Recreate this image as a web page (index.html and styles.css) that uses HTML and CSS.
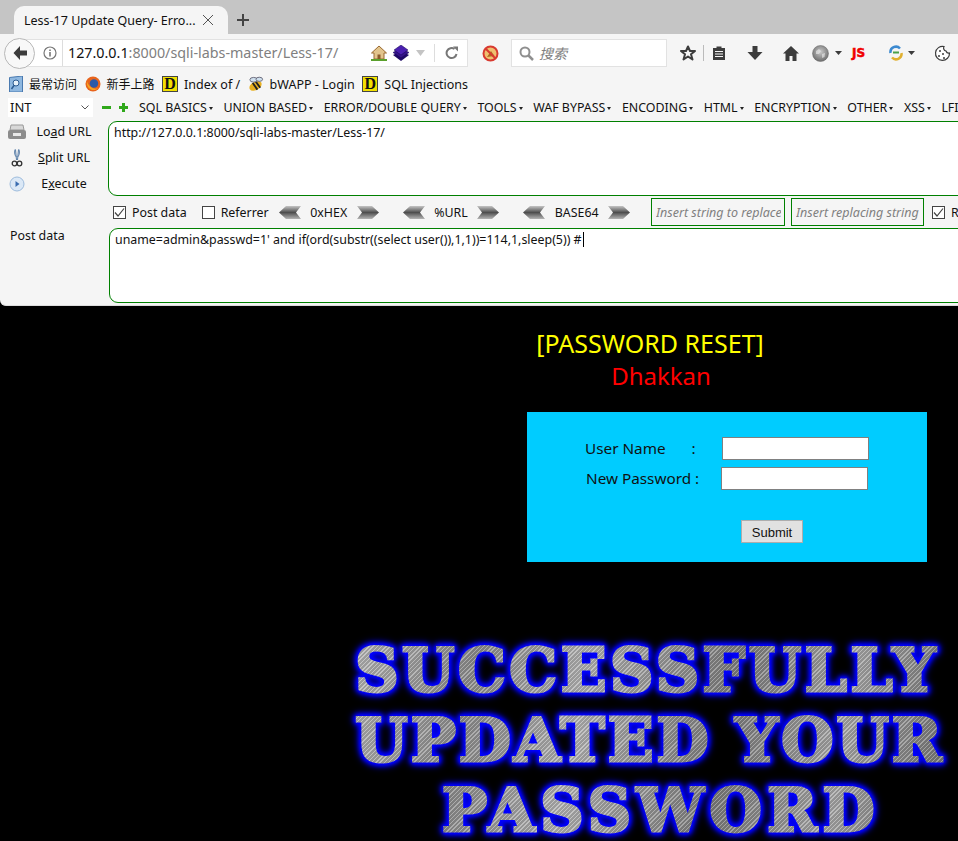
FILE: index.html
```html
<!DOCTYPE html>
<html lang="en">

<head>
    <meta charset="utf-8">
    <meta name="viewport" content="width=device-width, initial-scale=1">
    <title>Less-17 Update Query- Error based</title>
    <link rel="stylesheet" href="styles.css">
</head>

<body>
    <!-- Shared chevron for the encode buttons -->
    <svg class="defs" width="0" height="0">
        <defs>
            <linearGradient id="chev" x1="0" y1="0" x2="0" y2="1">
                <stop offset="0" stop-color="#c4c4c4"/>
                <stop offset="0.5" stop-color="#4e4e4e"/>
                <stop offset="1" stop-color="#b4b4b4"/>
            </linearGradient>
            <radialGradient id="globe" cx="0.5" cy="0.4" r="0.6">
                <stop offset="0" stop-color="#c8c8c8"/>
                <stop offset="1" stop-color="#6e6e6e"/>
            </radialGradient>
            <symbol id="chev-left" viewBox="0 0 22 13">
                <path d="M0 6.500 7 0H22L17 6.500 22 13H7Z" fill="url(#chev)"/>
            </symbol>
            <symbol id="chev-right" viewBox="0 0 22 13">
                <path d="M22 6.500 15 0H0L5 6.500 0 13H15Z" fill="url(#chev)"/>
            </symbol>
        </defs>
    </svg>

    <!-- Tab strip -->
    <div class="tabstrip">
        <div class="tab">
            <span class="tab-title">Less-17 Update Query- Erro...</span>
            <svg class="tab-close" width="10" height="10" viewBox="0 0 10 10"><path d="M0 0 10 10M10 0 0 10" stroke="#555" stroke-width="1" fill="none"/></svg>
        </div>
        <svg class="tab-new" width="12" height="12" viewBox="0 0 12 12"><path d="M6 0V12M0 6H12" stroke="#444" stroke-width="2" fill="none"/></svg>
    </div>

    <!-- Navigation toolbar -->
    <div class="toolbar">
        <div class="back">
            <svg width="16" height="16" viewBox="0 0 16 16"><path d="M8 1 1.500 8 8 15V10.500H15V5.500H8Z" fill="#3c3c3c"/></svg>
        </div>
        <div class="urlbar">
            <svg class="info" width="14" height="14" viewBox="0 0 14 14"><circle cx="7" cy="7" r="6" fill="none" stroke="#777" stroke-width="1.200"/><path d="M7 6V10.500M7 3.500V5" stroke="#777" stroke-width="1.600" fill="none"/></svg>
            <span class="url"><b>127.0.0.1</b>:8000/sqli-labs-master/Less-17/</span>
            <svg class="url-icon" width="16" height="16" viewBox="0 0 16 16"><path d="M8 1 0.500 8H3V14H13V8H15.500Z" fill="#e2c48c" stroke="#9a6a30" stroke-width="1"/><path d="M6.500 14V9.500H9.500V14Z" fill="#8a5a2a"/><path d="M0 15H16" stroke="#5aa02c" stroke-width="2"/></svg>
            <svg class="url-icon stack" width="16" height="16" viewBox="0 0 16 16"><path d="M8 6 16 10 8 16 0 10Z" fill="#1f0a66"/><path d="M8 3 16 7.500 8 13 0 7.500Z" fill="#34128a" stroke="#140650" stroke-width="0.500"/><path d="M8 0 15 5 8 10 1 5Z" fill="#4a1fb0" stroke="#140650" stroke-width="0.500"/></svg>
            <svg class="url-drop" width="9" height="6" viewBox="0 0 9 6"><path d="M0 0H9L4.500 6Z" fill="#c4c4c4"/></svg>
            <span class="url-sep"></span>
            <svg class="reload" width="14" height="14" viewBox="0 0 14 14"><path d="M11.500 8A5 5 0 1 1 9.500 3" stroke="#777" stroke-width="2" fill="none"/><path d="M8 0.500H13V5.500Z" fill="#777"/></svg>
        </div>
        <svg class="noscript" width="17" height="17" viewBox="0 0 17 17"><circle cx="8.500" cy="8.500" r="7" fill="#f0c070" stroke="#d83a30" stroke-width="2"/><path d="M5 12 9 6 12.500 11Z" fill="#b06a20"/><path d="M3.500 3.500 13.500 13.500" stroke="#d83a30" stroke-width="2"/></svg>
        <div class="searchbar">
            <svg width="15" height="15" viewBox="0 0 15 15"><circle cx="6" cy="6" r="4.500" fill="none" stroke="#8f8f8f" stroke-width="2"/><path d="M9.500 9.500 14 14" stroke="#8f8f8f" stroke-width="2.500"/></svg>
            <span class="search-hint">搜索</span>
        </div>
        <div class="tools">
            <svg class="t-star" width="16" height="16" viewBox="0 0 16 16"><path d="M8 1.500 10 6H15L11 9.300 12.500 14.500 8 11.500 3.500 14.500 5 9.300 1 6H6Z" fill="none" stroke="#3c3c3c" stroke-width="2" stroke-linejoin="round"/></svg>
            <span class="t-sep"></span>
            <svg class="t-list" width="14" height="16" viewBox="0 0 14 16"><path d="M1 3H4.500V1.500H9.500V3H13V15H1Z" fill="#3c3c3c"/><path d="M3 6.500H11M3 9H11M3 11.500H11" stroke="#f5f5f5" stroke-width="1"/></svg>
            <svg class="t-down" width="16" height="16" viewBox="0 0 15 16"><path d="M5 1H10V7H15L7.500 15 0 7H5Z" fill="#3c3c3c"/></svg>
            <svg class="t-home" width="16" height="15" viewBox="0 0 16 15"><path d="M8 0 16 7.500H13.500V15H9.500V10H6.500V15H2.500V7.500H0Z" fill="#3c3c3c"/></svg>
            <svg class="t-globe" width="17" height="17" viewBox="0 0 17 17"><circle cx="8.500" cy="8.500" r="8" fill="url(#globe)" stroke="#666" stroke-width="0.500"/><path d="M4 6 7 4 9 6 7 9 4 9ZM10 9 13 8 12.500 12 10 13Z" fill="#eee" opacity="0.600"/></svg>
            <svg class="t-drop" width="7" height="4" viewBox="0 0 7 4"><path d="M0 0H7L3.500 4Z" fill="#3c3c3c"/></svg>
            <span class="t-js">JS</span>
            <svg class="t-sync" width="14" height="16" viewBox="0 0 14 16"><path d="M1.500 8A5.500 5.500 0 0 1 11 3.500" stroke="#3c8ad0" stroke-width="2.500" fill="none"/><path d="M12.500 8A5.500 5.500 0 0 1 3 12.500" stroke="#e0b030" stroke-width="2.500" fill="none"/><path d="M4 7.500H10" stroke="#4aa04a" stroke-width="2"/></svg>
            <svg class="t-drop2" width="7" height="4" viewBox="0 0 7 4"><path d="M0 0H7L3.500 4Z" fill="#3c3c3c"/></svg>
            <svg class="t-cookie" width="17" height="17" viewBox="0 0 17 17"><path d="M10 1.500A7 7 0 1 0 15.500 8 3 3 0 0 1 12 6 3 3 0 0 1 10 1.500Z" fill="#fff" stroke="#3c3c3c" stroke-width="1.200"/><circle cx="6" cy="6" r="1" fill="#3c3c3c"/><circle cx="9" cy="9" r="1" fill="#3c3c3c"/><circle cx="5" cy="11" r="1" fill="#3c3c3c"/><circle cx="10" cy="13" r="1" fill="#3c3c3c"/></svg>
            <span class="t-sep2"></span>
        </div>
    </div>

    <!-- Bookmarks -->
    <div class="bookmarks">
        <span class="bm cjk">
            <svg width="14" height="16" viewBox="0 0 14 16"><path d="M0.500 1.500 13.500 0V16H0.500Z" fill="#8fb8e0" stroke="#4a7ab0"/><circle cx="7" cy="7" r="3" fill="#e8f2fa" stroke="#2a5a90"/><path d="M5 9.500 2.500 13" stroke="#2a5a90" stroke-width="1.500"/></svg>
            最常访问
        </span>
        <span class="bm cjk">
            <svg width="16" height="16" viewBox="0 0 17 17"><circle cx="8.500" cy="8.500" r="8" fill="#e8641c"/><circle cx="9.500" cy="8" r="4.500" fill="#2a5aa8"/><path d="M2 5C3 10 8 15 14 13 10 17 1 15 2 5Z" fill="#f5a623"/></svg>
            新手上路
        </span>
        <span class="bm"><span class="d-icon">D</span>Index of /</span>
        <span class="bm">
            <svg width="16" height="16" viewBox="0 0 17 16"><ellipse cx="8" cy="10" rx="7" ry="4.500" transform="rotate(-30 8 10)" fill="#e8b020"/><path d="M5 7 10 14M8 5 13 12" stroke="#222" stroke-width="2"/><ellipse cx="6" cy="3.500" rx="4" ry="2.500" fill="#cfe0ee" stroke="#667"/><ellipse cx="12" cy="3" rx="3.500" ry="2.200" fill="#cfe0ee" stroke="#667"/></svg>
            bWAPP - Login
        </span>
        <span class="bm"><span class="d-icon">D</span>SQL Injections</span>
    </div>

    <!-- HackBar -->
    <div class="hackbar">
        <div class="hb-menu">
            <div class="hb-select">
                <span>INT</span>
                <svg width="8" height="5" viewBox="0 0 8 5"><path d="M0.500 0.500 4 4 7.500 0.500" stroke="#555" fill="none"/></svg>
            </div>
            <span class="pm"><span class="pm-h"></span></span>
            <span class="pm"><span class="pm-h"></span><span class="pm-v"></span></span>
            <ul class="hb-items">
                <li>SQL BASICS</li>
                <li>UNION BASED</li>
                <li>ERROR/DOUBLE QUERY</li>
                <li>TOOLS</li>
                <li>WAF BYPASS</li>
                <li>ENCODING</li>
                <li>HTML</li>
                <li>ENCRYPTION</li>
                <li>OTHER</li>
                <li>XSS</li>
                <li>LFI</li>
            </ul>
        </div>

        <div class="hb-body">
            <div class="hb-side">
                <div class="hb-btn">
                    <svg width="20" height="16" viewBox="0 0 20 16"><path d="M4 1H16L17 6H3Z" fill="#d8d8d8" stroke="#999"/><rect x="1" y="6" width="18" height="9" rx="2" fill="#8c8c8c"/><rect x="6" y="9" width="8" height="3" fill="#e8e8e8"/></svg>
                    <span>Lo<u>a</u>d URL</span>
                </div>
                <div class="hb-btn">
                    <svg width="20" height="18" viewBox="0 0 20 18"><path d="M8.500 0.500 9.500 11M11.500 0.500 10.500 11M8 0.500C7 4 8 7 9.500 8M12 0.500C13 4 12 7 10.500 8" stroke="#5a7fa8" stroke-width="1" fill="none"/><circle cx="7.500" cy="14.500" r="2.300" fill="none" stroke="#333" stroke-width="1.300"/><circle cx="12.500" cy="14.500" r="2.300" fill="none" stroke="#333" stroke-width="1.300"/></svg>
                    <span><u>S</u>plit URL</span>
                </div>
                <div class="hb-btn">
                    <svg width="20" height="16" viewBox="0 0 20 16"><circle cx="10" cy="8" r="7" fill="#dbe8f6" stroke="#9dbbdc"/><path d="M8.500 5 12.500 8 8.500 11Z" fill="#3a6cb0"/></svg>
                    <span>E<u>x</u>ecute</span>
                </div>
            </div>
            <div class="hb-area hb-url">http://127.0.0.1:8000/sqli-labs-master/Less-17/</div>
        </div>

        <div class="hb-options">
            <label class="check"><span class="box on"><svg width="11" height="11" viewBox="0 0 11 11"><path d="M1 5.500 4 9 10 1.500" stroke="#444" fill="none" stroke-width="1.200"/></svg></span>Post data</label>
            <label class="check referrer"><span class="box"></span>Referrer</label>
            <div class="encode">
                <svg class="chev" width="22" height="13"><use href="#chev-left"/></svg><span class="enc-name">0xHEX</span><svg class="chev" width="22" height="13"><use href="#chev-right"/></svg>
            </div>
            <div class="encode">
                <svg class="chev" width="22" height="13"><use href="#chev-left"/></svg><span class="enc-name">%URL</span><svg class="chev" width="22" height="13"><use href="#chev-right"/></svg>
            </div>
            <div class="encode">
                <svg class="chev" width="22" height="13"><use href="#chev-left"/></svg><span class="enc-name">BASE64</span><svg class="chev" width="22" height="13"><use href="#chev-right"/></svg>
            </div>
            <input class="replace" type="text" placeholder="Insert string to replace">
            <input class="replace" type="text" placeholder="Insert replacing string">
            <label class="check"><span class="box on"><svg width="11" height="11" viewBox="0 0 11 11"><path d="M1 5.500 4 9 10 1.500" stroke="#444" fill="none" stroke-width="1.200"/></svg></span>Replace</label>
        </div>

        <div class="hb-body hb-post">
            <div class="post-label">Post data</div>
            <div class="hb-area">uname=admin&amp;passwd=1' and if(ord(substr((select user()),1,1))=114,1,sleep(5)) #<span class="caret"></span></div>
        </div>
    </div>

    <!-- The page under test -->
    <div class="page">
        <div class="heading">
            <div class="reset">[PASSWORD RESET]</div>
            <div class="dhakkan">Dhakkan</div>
        </div>
        <form class="reset-form">
            <div class="form-row">
                <label class="name-label">User Name<span class="colon">:</span></label>
                <input type="text" class="form-input">
            </div>
            <div class="form-row second">
                <label class="pass-label">New Password :</label>
                <input type="text" class="form-input">
            </div>
            <input class="submit" type="button" value="Submit">
        </form>
        <div class="flag">
            <div class="flag-first">SUCCESSFULLY</div>
            <div>UPDATED YOUR</div>
            <div class="flag-last">PASSWORD</div>
        </div>
    </div>
</body>

</html>
```

FILE: styles.css
```css
html,
body {
    margin: 0;
    height: 841px;
    overflow: hidden;
}

body {
    width: 958px;
    background-color: black;
    font-family: "Noto Sans", "Noto Sans CJK SC", sans-serif;
    font-size: 13px;
    color: #111;
}

.defs {
    position: absolute;
}

/* Tab strip */
.tabstrip {
    height: 34px;
    background-color: #c5c5c5;
    display: flex;
    align-items: flex-end;
}

.tab {
    width: 214px;
    height: 28px;
    margin-left: 14px;
    box-sizing: border-box;
    padding: 0 15px 0 10px;
    background-color: #f5f5f5;
    border-radius: 10px 10px 0 0;
    display: flex;
    align-items: center;
    justify-content: space-between;
}

.tab-title {
    font-size: 12.500px;
    white-space: nowrap;
}

.tab-new {
    margin: 0 0 8px 9px;
}

/* Toolbar */
.toolbar {
    height: 36px;
    box-sizing: border-box;
    padding-top: 2px;
    background-color: #f5f5f5;
    display: flex;
    align-items: center;
}

.toolbar svg,
.toolbar span {
    flex: none;
}

.back {
    width: 29px;
    height: 29px;
    flex: none;
    margin-left: 4px;
    border: 1px solid #b8b8b8;
    border-radius: 50%;
    background-color: #f8f8f8;
    display: flex;
    align-items: center;
    justify-content: center;
    z-index: 1;
}

.urlbar {
    width: 429px;
    height: 26px;
    flex: none;
    margin-left: -14px;
    padding-left: 16px;
    background-color: white;
    border: 1px solid #e2e2e2;
    display: flex;
    align-items: center;
}

.info {
    margin-left: 5px;
}

.url {
    margin-left: 5px;
    padding-left: 5px;
    border-left: 1px solid #ddd;
    font-size: 14.300px;
    line-height: 26px;
    color: #808080;
    white-space: nowrap;
    width: 303px;
}

.url b {
    font-weight: normal;
    color: #111;
}

.stack {
    margin-left: 6px;
}

.url-drop {
    margin-left: 7px;
}

.url-sep {
    width: 1px;
    height: 18px;
    margin-left: 9px;
    background-color: #ddd;
}

.reload {
    margin-left: 10px;
}

.noscript {
    margin-left: 14px;
}

.searchbar {
    width: 156px;
    height: 28px;
    flex: none;
    margin-left: 12px;
    background-color: white;
    border: 1px solid #e2e2e2;
    display: flex;
    align-items: center;
    gap: 5px;
    padding-left: 7px;
    box-sizing: border-box;
}

.search-hint {
    font-style: italic;
    color: #808080;
    font-size: 14px;
}

.tools {
    display: flex;
    align-items: center;
    margin-left: 13px;
}

.t-sep {
    width: 1px;
    height: 16px;
    margin-left: 7px;
    background-color: #bbb;
}

.t-list {
    margin-left: 8px;
}

.t-down {
    margin-left: 21px;
}

.t-home {
    margin-left: 20px;
}

.t-globe {
    margin-left: 13px;
}

.t-drop {
    margin-left: 6px;
}

.t-js {
    margin-left: 10px;
    width: 26px;
    color: #f00000;
    font-family: "DejaVu Sans", sans-serif;
    font-weight: bold;
    font-size: 12px;
    -webkit-text-stroke: 0.500px #f00000;
}

.t-sync {
    margin-left: 11px;
}

.t-drop2 {
    margin-left: 5px;
}

.t-cookie {
    margin-left: 19px;
}

.t-sep2 {
    width: 1px;
    height: 16px;
    margin-left: 7px;
    background-color: #bbb;
}

/* Bookmarks */
.bookmarks {
    height: 26px;
    box-sizing: border-box;
    padding: 2px 0 0 9px;
    background-color: #f5f5f5;
    display: flex;
    align-items: center;
    gap: 7.500px;
    font-size: 12.500px;
}

.bm {
    display: flex;
    align-items: center;
    gap: 6px;
    white-space: nowrap;
}

.cjk {
    font-size: 12px;
}

.d-icon {
    width: 16px;
    height: 16px;
    box-sizing: border-box;
    background-color: #f2e000;
    border: 1px solid #444;
    font-family: "Liberation Serif", serif;
    font-weight: bold;
    font-size: 16px;
    line-height: 14px;
    text-align: center;
}

/* HackBar */
.hackbar {
    height: 210px;
    background-color: #f5f5f5;
    border-radius: 0 0 0 6px;
    border-bottom: 1px solid #ddd;
    box-sizing: border-box;
    overflow: hidden;
}

.hb-menu {
    height: 22px;
    display: flex;
    align-items: center;
    padding-left: 8px;
    white-space: nowrap;
}

.hb-select {
    width: 85px;
    height: 19px;
    flex: none;
    box-sizing: border-box;
    background-color: white;
    padding: 0 4px 0 2px;
    display: flex;
    align-items: center;
    justify-content: space-between;
}

.pm {
    width: 9px;
    height: 9px;
    flex: none;
    position: relative;
    margin-left: 9px;
}

.pm + .pm {
    margin-left: 8px;
}

.pm-h {
    position: absolute;
    left: 0;
    top: 3px;
    width: 9px;
    height: 3px;
    background-color: #2fa81a;
}

.pm-v {
    position: absolute;
    left: 3px;
    top: 0;
    width: 3px;
    height: 9px;
    background-color: #2fa81a;
}

.hb-items {
    list-style: none;
    flex: none;
    margin: 0 0 0 11px;
    padding: 0;
    display: flex;
    gap: 10.600px;
    font-size: 12.400px;
}

.hb-items li::after {
    content: "";
    display: inline-block;
    margin-left: 2px;
    border: 2px solid transparent;
    border-top: 3px solid #222;
    border-bottom: 0;
    vertical-align: 2px;
}

.hb-body {
    display: flex;
    height: 75px;
    margin-top: 3px;
}

.hb-side {
    width: 108px;
    flex: none;
    display: flex;
    flex-direction: column;
    gap: 5px;
}

.hb-btn {
    height: 21px;
    display: flex;
    align-items: center;
    padding-left: 7px;
    font-size: 12.400px;
}

.hb-btn span {
    width: 66px;
    text-align: center;
    margin-left: 4px;
}

.hb-area {
    width: 1000px;
    flex: none;
    box-sizing: border-box;
    background-color: white;
    border: 1px solid green;
    border-radius: 9px;
    padding: 2px 5px;
    font-size: 12.400px;
    line-height: 17px;
    white-space: nowrap;
}

.hb-options {
    height: 30px;
    margin-top: 1px;
    padding-left: 113px;
    display: flex;
    align-items: center;
    white-space: nowrap;
    font-size: 12.400px;
}

.hb-options > * {
    flex: none;
}

.check {
    display: flex;
    align-items: center;
    gap: 6px;
}

.referrer {
    margin-left: 15px;
}

.box {
    width: 13px;
    height: 13px;
    box-sizing: border-box;
    border: 1px solid #444;
    background-color: white;
    display: flex;
    align-items: center;
    justify-content: center;
}

.encode {
    display: flex;
    align-items: center;
}

.referrer + .encode {
    margin-left: 10px;
}

.encode + .encode {
    margin-left: 24px;
}

.enc-name {
    margin: 0 9.500px;
    text-align: center;
}

.replace {
    width: 134px;
    height: 28px;
    box-sizing: border-box;
    border: 1px solid green;
    background-color: #f5f5f5;
    padding: 0 3px 0 4px;
    margin-left: 6px;
    font-family: inherit;
    font-size: 12.500px;
    font-style: italic;
    outline: none;
}

.replace + .replace {
    width: 133px;
}

.encode + .replace {
    margin-left: 21px;
}

.replace::placeholder {
    color: #808080;
    opacity: 1;
}

.replace + .check {
    margin-left: 8px;
}

.hb-post {
    margin-top: 1px;
}

.post-label {
    width: 99px;
    flex: none;
    margin-top: -1px;
    padding: 0 0 0 10px;
    font-size: 12.400px;
}

.caret {
    display: inline-block;
    width: 1px;
    height: 15px;
    margin-left: 1px;
    background-color: black;
    vertical-align: -3px;
}

/* The page */
.page {
    padding-top: 21px;
    background-color: black;
}

.heading {
    width: 228px;
    margin-left: 536px;
    text-align: center;
}

.reset {
    color: yellow;
    font-size: 25px;
    line-height: 32px;
    white-space: nowrap;
}

.dhakkan {
    color: red;
    font-size: 24px;
    line-height: 33px;
    padding-left: 22px;
}

.reset-form {
    width: 400px;
    height: 150px;
    margin: 20px 0 0 527px;
    background-color: #00ccff;
    display: flex;
    flex-direction: column;
    padding-top: 25px;
    box-sizing: border-box;
    font-size: 15.300px;
}

.form-row {
    display: flex;
    align-items: center;
    height: 23px;
    padding-left: 58px;
}

.form-row label {
    padding-bottom: 2px;
}

.second {
    margin-top: 7px;
    padding-left: 59px;
}

.name-label {
    width: 137px;
    flex: none;
}

.colon {
    margin-left: 26px;
}

.pass-label {
    width: 135px;
    flex: none;
}

.form-input {
    width: 147px;
    height: 23px;
    box-sizing: border-box;
    border: 1px solid #808080;
    background-color: white;
    padding: 0;
}

.submit {
    width: 62px;
    height: 23px;
    margin: 30px 0 0 214px;
    box-sizing: border-box;
    border: 1px solid #adadad;
    background-color: #e1e1e1;
    font-family: "Liberation Sans", sans-serif;
    font-size: 13px;
    padding: 1px 0 0;
    color: #111;
}

/* Stand-in for the success picture */
.flag {
    width: 600px;
    margin: 73px 0 0 350px;
    text-align: center;
    font-family: "DejaVu Serif", serif;
    font-weight: bold;
    font-size: 60px;
    line-height: 70px;
    letter-spacing: 3px;
    white-space: nowrap;
    color: transparent;
    -webkit-text-stroke: 3px transparent;
    background:
        repeating-linear-gradient(135deg, rgba(255, 255, 255, 0.25) 0 1px, rgba(0, 0, 0, 0.12) 1px 3px),
        linear-gradient(100deg, #b8b8b8 0%, #8e8e8e 20%, #b4b4b4 38%, #7e7e7e 62%, #a8a8a8 80%, #707070 100%);
    -webkit-background-clip: text;
    background-clip: text;
    filter: drop-shadow(0 0 1px #0000ff) drop-shadow(0 0 2px #0000ff) drop-shadow(0 0 2px #0000ff) drop-shadow(0 0 3px #0000ff);
}

.flag-first {
    letter-spacing: 3.600px;
    margin-left: -6px;
}

.flag-last {
    letter-spacing: 5.500px;
    padding-left: 22px;
}
```
